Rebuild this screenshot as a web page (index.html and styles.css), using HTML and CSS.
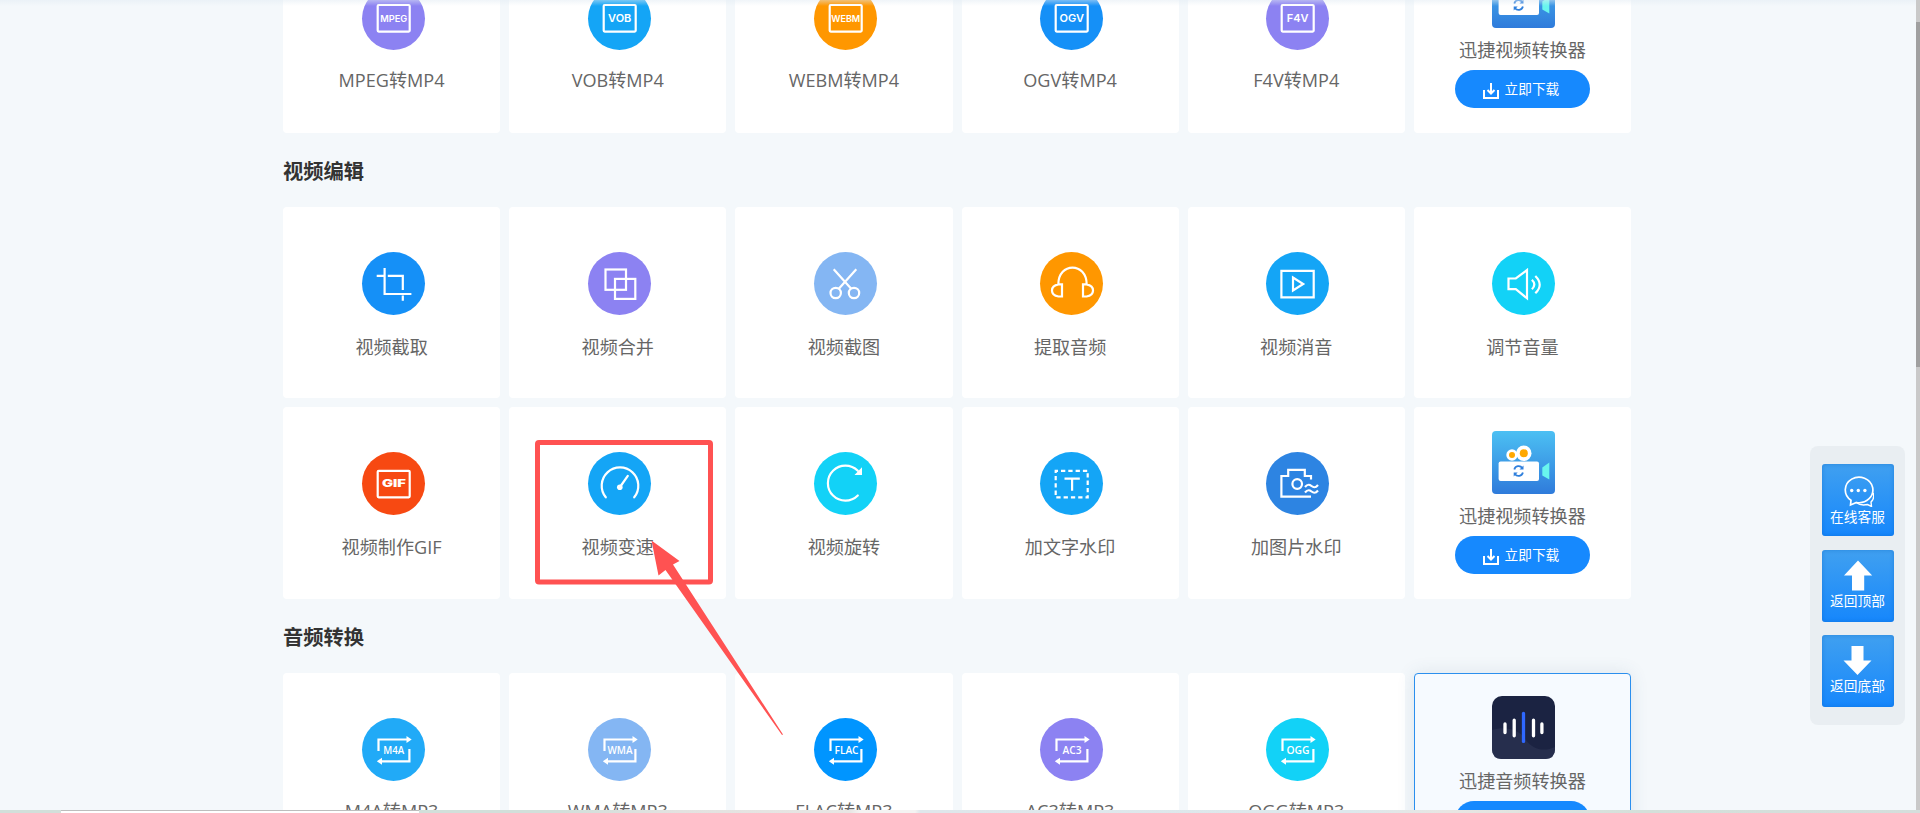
FILE: index.html
```html
<!DOCTYPE html>
<html lang="zh-CN">
<head>
<meta charset="utf-8">
<title>视频编辑</title>
<link rel="stylesheet" href="styles.css">
</head>
<body>
<svg class="defs" width="0" height="0">
  <defs>
    <linearGradient id="sky" x1="0" y1="0" x2="0" y2="1"><stop offset="0" stop-color="#4cc0f3"/><stop offset="1" stop-color="#2f7bdb"/></linearGradient>
    <symbol id="frame" viewBox="0 0 63 63"><rect x="15.7" y="18" width="32" height="26.6" rx="1"/></symbol>
    <symbol id="convert" viewBox="0 0 63 63"><path d="M16.5 33V21.5H46M47.4 31v12.3H18"/><path class="solid" d="M44.5 18l5.2 3.5-5.2 3.5zM20 39.8l-5.2 3.5 5.2 3.5z"/></symbol>
    <symbol id="camcorder" viewBox="0 0 63 63">
      <rect width="63" height="63" rx="4" fill="url(#sky)" stroke="none"/>
      <g stroke="none"><circle cx="20" cy="24" r="5.7" fill="#fff"/><circle cx="20" cy="24" r="3" fill="#ffa800"/><circle cx="31.8" cy="22.3" r="7.7" fill="#fff"/><circle cx="31.8" cy="22.3" r="4" fill="#ffa800"/><rect x="6.6" y="30.5" width="40.4" height="19.5" rx="2" fill="#fff"/><path fill="#69f5ee" d="M50.3 36.5l7-5v17l-7-4z"/></g>
      <path d="M22.3 38.5a4.5 4.5 0 0 1 8-1.5M30.9 41.5a4.5 4.5 0 0 1-8 1.5" stroke="#2f7fdc" stroke-width="1.8"/><path d="M31.5 34.5v4h-4zM21.7 45.5v-4h4z" fill="#2f7fdc" stroke="none"/>
    </symbol>
    <symbol id="download" viewBox="0 0 16 16"><path d="M1 7v8h14V7M8 0v10M4.5 7L8 10.5 11.5 7"/></symbol>
  </defs>
</svg>
<main class="page">
  <section class="grid formats">
    <a class="card"><svg class="icon violet"><use href="#frame"/><text x="31.7" y="34.9" font-size="9.5" textLength="27" lengthAdjust="spacingAndGlyphs">MPEG</text></svg><span class="label">MPEG转MP4</span></a>
    <a class="card"><svg class="icon azure"><use href="#frame"/><text x="31.7" y="35.3" font-size="11">VOB</text></svg><span class="label">VOB转MP4</span></a>
    <a class="card"><svg class="icon orange"><use href="#frame"/><text x="31.7" y="34.9" font-size="9.5" textLength="29" lengthAdjust="spacingAndGlyphs">WEBM</text></svg><span class="label">WEBM转MP4</span></a>
    <a class="card"><svg class="icon blue"><use href="#frame"/><text x="31.7" y="35.3" font-size="11">OGV</text></svg><span class="label">OGV转MP4</span></a>
    <a class="card"><svg class="icon violet"><use href="#frame"/><text x="31.7" y="35.3" font-size="11">F4V</text></svg><span class="label">F4V转MP4</span></a>
    <a class="card promo"><svg class="app"><use href="#camcorder"/></svg><span class="name">迅捷视频转换器</span><span class="button"><svg class="dl"><use href="#download"/></svg>立即下载</span></a>
  </section>

  <h2 class="title">视频编辑</h2>
  <section class="grid">
    <a class="card"><svg class="icon blue"><path d="M14.7 23.8H22M25.8 23.8h15V38M22.6 16v26H49.4M40.8 43.5v5.2"/></svg><span class="label">视频截取</span></a>
    <a class="card"><svg class="icon violet"><rect x="17.5" y="17.5" width="20.5" height="20.3"/><rect x="27" y="26.9" width="20.3" height="20"/></svg><span class="label">视频合并</span></a>
    <a class="card"><svg class="icon pale"><path d="M19.7 17.3L37.2 36.7M42.3 17.3L24.8 36.7"/><circle cx="21.7" cy="41" r="5.2"/><circle cx="40" cy="41" r="5.2"/></svg><span class="label">视频截图</span></a>
    <a class="card"><svg class="icon orange"><path d="M18.3 32.5C18.3 9.9 46.7 9.9 46.7 32.5M22 32.3v12.2h-3.5c-8.7-1.5-8.7-10.7 0-12.2zM43 32.3v12.2h3.5c8.7-1.5 8.7-10.7 0-12.2z"/></svg><span class="label">提取音频</span></a>
    <a class="card"><svg class="icon azure"><path d="M15.4 18.8h32.3v26.5H15.4zM27 25.5v13l10.2-6.5z"/></svg><span class="label">视频消音</span></a>
    <a class="card"><svg class="icon cyan"><path d="M16.5 26.5h7.3L35 18v28.3L23.8 37.2h-7.3zM39.9 27.7q4.8 4.8 0 9.6M43.3 24q8.8 8.7 0 17.3"/></svg><span class="label">调节音量</span></a>
  </section>
  <section class="grid last">
    <a class="card"><svg class="icon red"><rect x="15.7" y="18.8" width="32" height="26.5" rx="1"/><text class="gif" x="31.9" y="35.3" textLength="24" lengthAdjust="spacingAndGlyphs">GIF</text></svg><span class="label">视频制作GIF</span></a>
    <a class="card"><svg class="icon azure"><path d="M17.8 45.3A18.3 18.3 0 1 1 46.2 45.3M39.8 23.8L32 35" stroke-linecap="round"/><circle class="solid" cx="31.8" cy="35.2" r="2.8"/></svg><span class="label">视频变速</span></a>
    <a class="card"><svg class="icon cyan"><path d="M43.8 43.5A17.5 17.5 0 1 1 43.8 18.8" stroke-linecap="round"/><path class="solid" d="M48 15.300v7.700h-7.500z"/></svg><span class="label">视频旋转</span></a>
    <a class="card"><svg class="icon azure"><path d="M15.7 18.8h32v26.5h-32z" stroke-dasharray="4.300 3" stroke-dashoffset="2"/><path d="M24.5 26.7h15.3M32.1 26.7v12"/></svg><span class="label">加文字水印</span></a>
    <a class="card"><svg class="icon royal"><path d="M45 44.7H15.4V24h6.8v-6.2h16.6V24H45v3.5"/><circle cx="31.2" cy="32" r="4.8"/><path d="M39 35c2.5-3 4-3 6.5-1s4 2 6.5-1M39 40.5c2.5-3 4-3 6.5-1s4 2 6.5-1"/></svg><span class="label">加图片水印</span></a>
    <a class="card promo"><svg class="app"><use href="#camcorder"/></svg><span class="name">迅捷视频转换器</span><span class="button"><svg class="dl"><use href="#download"/></svg>立即下载</span></a>
  </section>

  <h2 class="title">音频转换</h2>
  <section class="grid formats">
    <a class="card"><svg class="icon sky"><use href="#convert"/><text class="narrow" x="31.7" y="36" textLength="21" lengthAdjust="spacingAndGlyphs">M4A</text></svg><span class="label">M4A转MP3</span></a>
    <a class="card"><svg class="icon pale"><use href="#convert"/><text class="narrow" x="32" y="36" textLength="25" lengthAdjust="spacingAndGlyphs">WMA</text></svg><span class="label">WMA转MP3</span></a>
    <a class="card"><svg class="icon bright"><use href="#convert"/><text class="narrow" x="32.5" y="36" textLength="24" lengthAdjust="spacingAndGlyphs">FLAC</text></svg><span class="label">FLAC转MP3</span></a>
    <a class="card"><svg class="icon violet"><use href="#convert"/><text class="narrow" x="32" y="36" textLength="19" lengthAdjust="spacingAndGlyphs">AC3</text></svg><span class="label">AC3转MP3</span></a>
    <a class="card"><svg class="icon cyan"><use href="#convert"/><text class="narrow" x="32" y="36" textLength="23" lengthAdjust="spacingAndGlyphs">OGG</text></svg><span class="label">OGG转MP3</span></a>
    <a class="card promo active"><svg class="app" viewBox="0 0 63 63"><rect width="63" height="63" rx="10" fill="#1b2342"/><path fill="#262e4d" d="M0 34c13-4 27-1 33 9 8 11 19 13 30 8v2q0 10-10 10H10Q0 63 0 53z"/><g stroke="#fff" stroke-width="3.3" stroke-linecap="round"><path d="M13 28v8.5M22.2 24.2v15.6M41.5 24.2v15.6M49.9 28v8.5"/><path stroke="#2f68ff" d="M31.5 17.4v28"/></g></svg><span class="name">迅捷音频转换器</span><span class="button"><svg class="dl"><use href="#download"/></svg>立即下载</span></a>
  </section>
</main>

<aside class="tools">
  <a class="tool"><svg viewBox="0 0 32 32"><g fill="none" stroke="#fff" stroke-width="1.7"><path d="M8.500 30l.5-4.700A13.800 12.800 0 1 1 14.500 27.500L8.500 30z"/><path d="M31.300 18c1 3.500.3 6.500-2.300 9l.5 4.500-4-2c-4.500 1-8 .5-11-1.800" stroke-width="1.400"/></g><g fill="#fff"><circle cx="9.700" cy="15.500" r="1.700"/><circle cx="16.300" cy="15.500" r="1.700"/><circle cx="22.900" cy="15.500" r="1.700"/></g></svg>在线客服</a>
  <a class="tool arrow"><svg viewBox="0 0 32 32"><path fill="#fff" d="M16 1.500l14.200 15h-8v15H10v-15H2z"/></svg>返回顶部</a>
  <a class="tool arrow"><svg viewBox="0 0 32 32"><path fill="#fff" d="M9.500 2h12v14.500h8L15.500 31 1.500 16.500h8z"/></svg>返回底部</a>
</aside>

<svg class="mark" viewBox="0 0 260 310"><rect x="7.500" y="12.500" width="173" height="139.500" rx="1.500" fill="none" stroke="#ff5252" stroke-width="5"/><path fill="#ff5252" d="M121.500 110.500l28 20.500-6.500 3.500L253 304.500l-1 .5L135.500 140l-7 5.500z"/></svg>
<div class="header-shade"></div>
<div class="scrollbar"><div class="thumb"></div></div>
<div class="taskbar"><div class="tab"></div></div>
</body>
</html>
```
FILE: styles.css
```css
* { box-sizing: border-box; }

body {
  margin: 0;
  height: 813px;
  overflow: hidden;
  position: relative;
  background: #f4f8fb;
  color: #666;
  font-family: "Open Sans", "Noto Sans CJK SC", sans-serif;
}

.defs { position: absolute; }

.page {
  width: 1348px;
  height: 871px;
  overflow: hidden;
  margin: -58px 0 0 283px;
  overflow: clip;
  overflow-clip-margin: 20px;
}

.grid {
  display: grid;
  grid-template-columns: repeat(6, 1fr);
  grid-auto-rows: 191px;
  column-gap: 9px;
  margin-bottom: 9px;
}

.grid.last { grid-auto-rows: 192px; }

.title {
  display: flex;
  align-items: center;
  height: 74px;
  margin: -9px 0 0;
  padding-bottom: 1px;
  font-size: 20.300px;
  font-weight: 700;
  color: #333;
}

.card {
  display: flex;
  flex-direction: column;
  align-items: center;
  padding-top: 45px;
  border-radius: 4px;
  background: #fff;
}

.icon {
  flex: none;
  width: 63px;
  height: 63px;
  margin-left: 3px;
  border-radius: 50%;
  fill: none;
  stroke: #fff;
  stroke-width: 2.200;
}

.icon text {
  fill: #fff;
  stroke: none;
  font-family: Inter, "Liberation Sans", sans-serif;
  font-weight: 600;
  text-anchor: middle;
}

.icon .narrow {
  font-family: "Open Sans", sans-serif;
  font-weight: 600;
  font-size: 11px;
}

.icon .gif {
  font-size: 10px;
  font-weight: 900;
}

.solid { fill: #fff; stroke: none; }
.violet { background: #8c82f2; }
.azure { background: #14a5f6; }
.orange { background: #ff9700; }
.blue { background: #1590f7; }
.pale { background: #84b6f3; }
.cyan { background: #12d2f7; }
.red { background: #f74912; }
.royal { background: #2d84e2; }
.sky { background: #21aaf7; }
.bright { background: #0095ff; }

.label {
  margin-top: 18px;
  font-size: 18.100px;
  line-height: 28px;
}

.formats .label { margin-top: 16px; }

.promo { padding-top: 23px; }
.last .promo { padding-top: 24px; }

.app {
  flex: none;
  width: 63px;
  height: 63px;
  margin-left: 3px;
  fill: none;
}

.name {
  margin-top: 9px;
  font-size: 18.100px;
  line-height: 27px;
}

.button {
  display: flex;
  flex: none;
  align-items: center;
  justify-content: center;
  gap: 6px;
  width: 135px;
  height: 38px;
  margin-top: 6px;
  padding: 0 3px 2px 0;
  border-radius: 19px;
  background: #1689fe;
  color: #fff;
  font-size: 13.700px;
}

.dl {
  width: 16px;
  height: 16px;
  margin-top: 5px;
  fill: none;
  stroke: #fff;
  stroke-width: 2;
}

.active {
  border: 1px solid #2b8fee;
  padding-top: 22px;
  background: #f6faff;
  box-shadow: 0 0 18px rgba(60, 90, 120, .12);
}

.tools {
  position: absolute;
  left: 1810px;
  top: 446px;
  display: flex;
  flex-direction: column;
  align-items: center;
  gap: 13.500px;
  width: 95px;
  height: 279px;
  padding-top: 18px;
  border-radius: 8px;
  background: #e9eef2;
}

.tool {
  display: flex;
  flex-direction: column;
  align-items: center;
  width: 72px;
  height: 72px;
  padding-top: 11px;
  border-radius: 3px;
  background: linear-gradient(#40a0f0, #1687fc);
  box-shadow: inset 0 0 4px rgba(0, 90, 190, .4);
  color: #fff;
  font-size: 13.700px;
  line-height: 20px;
}

.tool.arrow { padding-top: 9px; }

.tool svg { width: 32px; height: 32px; }

.mark {
  position: absolute;
  left: 530px;
  top: 430px;
  width: 260px;
  height: 310px;
}

.header-shade {
  position: absolute;
  inset: 0 0 auto;
  height: 6px;
  background: linear-gradient(rgba(225, 235, 243, .5), rgba(235, 242, 248, 0));
}

.scrollbar {
  position: absolute;
  right: 0;
  top: 0;
  width: 4px;
  height: 810px;
  padding-top: 22px;
  background: #c9c9c9;
}

.thumb { height: 345px; background: #a0a0a0; }

.taskbar {
  position: absolute;
  left: 0;
  top: 810px;
  width: 1920px;
  height: 3px;
  padding-left: 61px;
  background: linear-gradient(90deg, #d2dfda 0 560px, #e3e2e0 680px, #e8e6e4 850px, #f4f3f2 860px 915px, #dfe7eb 920px, #dde8ec 1350px, #e8e6e3 1450px, #d4e0da 1640px, #d5dedc);
}

.tab {
  width: 358px;
  height: 3px;
  border-top: 1px solid #bdbdbd;
  background: #fff;
}
```
